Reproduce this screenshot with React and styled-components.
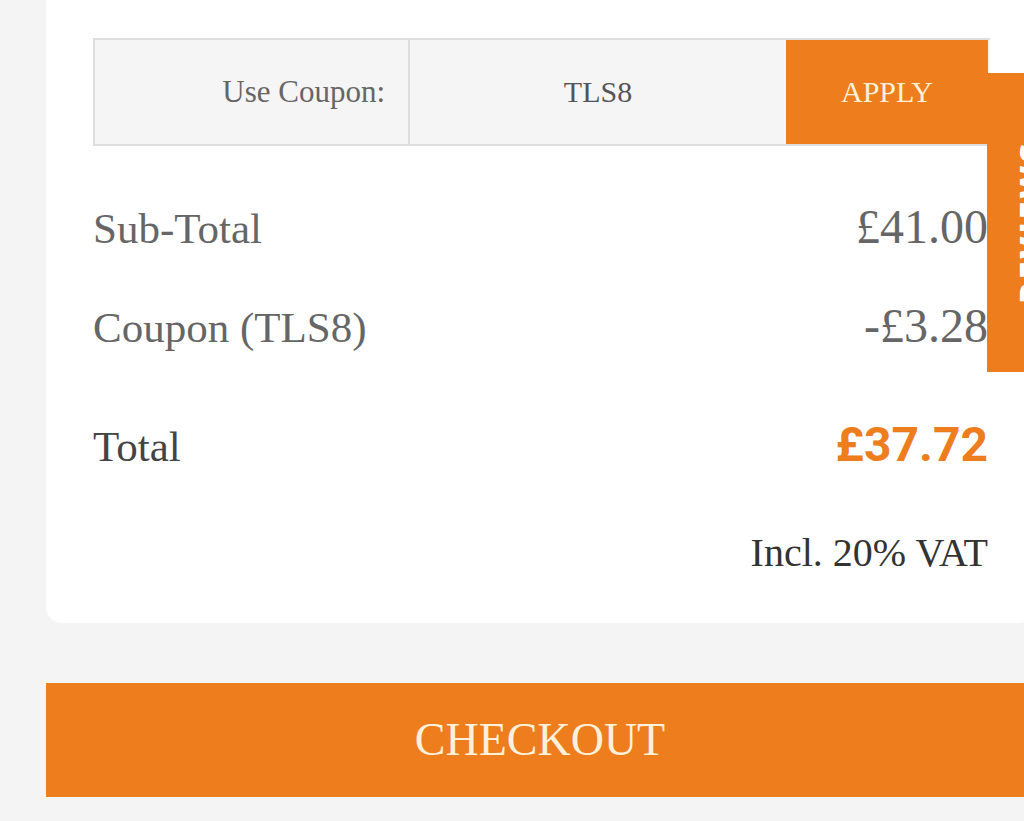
import React from "react";
import styled, { createGlobalStyle } from "styled-components";

const ORANGE = "#ee7d1d";

const GlobalStyle = createGlobalStyle`
  html, body {
    margin: 0;
    padding: 0;
    background: #f4f4f4;
    overflow: hidden;
  }
  body {
    font-family: "Liberation Serif", "Times New Roman", serif;
  }
`;

const Page = styled.div`
  width: 988px;
  margin-left: 46px;
  min-height: 821px;
`;

const Card = styled.div`
  background: #fff;
  border-radius: 0 0 16px 16px;
  padding: 38px 44px 50px 47px;
`;

const CouponBox = styled.div`
  display: grid;
  grid-template-columns: 313px 378px 202px;
  height: 104px;
  border: 2px solid #dedede;
  border-right: none;
  background: #f5f5f5;
`;

const CouponLabel = styled.div`
  display: flex;
  align-items: center;
  justify-content: flex-end;
  padding-right: 23px;
  font-size: 31px;
  color: #666;
`;

const CouponCode = styled.div`
  display: flex;
  align-items: center;
  justify-content: center;
  border-left: 2px solid #dedede;
  font-size: 30px;
  color: #555;
`;

const ApplyButton = styled.button`
  border: none;
  margin: 0;
  padding: 0;
  background: ${ORANGE};
  color: #fdf1dc;
  font-family: "Liberation Serif", "Times New Roman", serif;
  font-size: 30px;
  cursor: pointer;
`;

const Summary = styled.div`
  display: flex;
  flex-direction: column;
  padding-right: 2px;
  margin-top: 57px;
`;

const Row = styled.div`
  display: flex;
  justify-content: space-between;
  align-items: baseline;
  margin-top: ${(p) => p.$gap || 0}px;
`;

const Label = styled.span`
  font-size: 43px;
  line-height: 1;
  color: ${(p) => (p.$dark ? "#444" : "#666")};
`;

const Amount = styled.span`
  font-size: 48px;
  line-height: 1;
  color: #666;
`;

const TotalAmount = styled.span`
  font-family: Roboto, "Liberation Sans", Arial, sans-serif;
  font-weight: 700;
  font-size: 48px;
  line-height: 1;
  color: ${ORANGE};
`;

const VatNote = styled.div`
  align-self: flex-end;
  margin-top: 64px;
  font-size: 40px;
  line-height: 1;
  color: #333;
`;

const CheckoutButton = styled.button`
  display: block;
  width: 100%;
  height: 114px;
  margin-top: 60px;
  border: none;
  padding: 0;
  background: ${ORANGE};
  color: #fdf1dc;
  font-family: "Liberation Serif", "Times New Roman", serif;
  font-size: 46px;
  line-height: 114px;
  cursor: pointer;
`;

const SideTab = styled.div`
  position: fixed;
  left: 987px;
  top: 73px;
  width: 70px;
  height: 299px;
  background: ${ORANGE};
  display: flex;
  align-items: center;
  padding-left: 28px;
  box-sizing: border-box;
`;

const SideTabText = styled.span`
  writing-mode: vertical-rl;
  transform: rotate(180deg);
  font-family: "Open Sans", "Liberation Sans", sans-serif;
  font-weight: 800;
  font-size: 32px;
  line-height: 1;
  letter-spacing: 3px;
  color: #fff;
`;

export default function App() {
  return (
    <>
      <GlobalStyle />
      <Page>
        <Card>
          <CouponBox>
            <CouponLabel>Use Coupon:</CouponLabel>
            <CouponCode>TLS8</CouponCode>
            <ApplyButton>APPLY</ApplyButton>
          </CouponBox>
          <Summary>
            <Row>
              <Label>Sub-Total</Label>
              <Amount>£41.00</Amount>
            </Row>
            <Row $gap={51}>
              <Label>Coupon (TLS8)</Label>
              <Amount>-£3.28</Amount>
            </Row>
            <Row $gap={71}>
              <Label $dark>Total</Label>
              <TotalAmount>£37.72</TotalAmount>
            </Row>
            <VatNote>Incl. 20% VAT</VatNote>
          </Summary>
        </Card>
        <CheckoutButton>CHECKOUT</CheckoutButton>
      </Page>
      <SideTab>
        <SideTabText>REVIEWS</SideTabText>
      </SideTab>
    </>
  );
}
